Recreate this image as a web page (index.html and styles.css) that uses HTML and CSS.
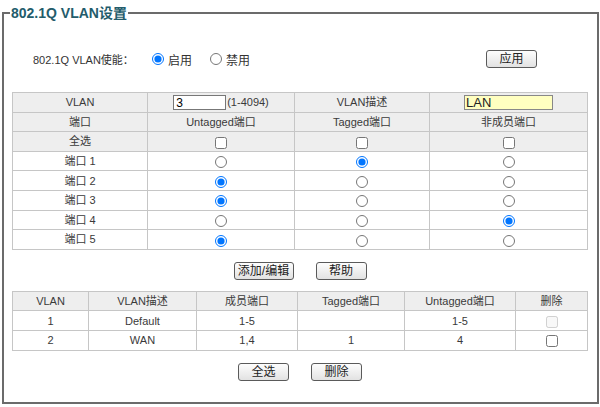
FILE: index.html
```html
<!DOCTYPE html>
<html>
<head>
<meta charset="utf-8">
<link rel="stylesheet" href="styles.css">
</head>
<body>
<fieldset class="panel">
  <legend class="panel-title">802.1Q VLAN设置</legend>
  <div class="enable-row">
    <span class="enable-label">802.1Q VLAN使能：</span>
    <label class="opt"><input type="radio" name="en" checked>启用</label>
    <label class="opt"><input type="radio" name="en">禁用</label>
    <span class="spacer"></span>
    <button class="btn btn-apply">应用</button>
  </div>

  <table class="grid cfg">
    <colgroup><col class="c1"><col class="c2"><col class="c3"><col class="c4"></colgroup>
    <tr class="head">
      <td>VLAN</td>
      <td><input class="vid" type="text" value="3">(1-4094)</td>
      <td>VLAN描述</td>
      <td><input class="desc" type="text" value="LAN"></td>
    </tr>
    <tr class="head">
      <td>端口</td><td>Untagged端口</td><td>Tagged端口</td><td>非成员端口</td>
    </tr>
    <tr class="head">
      <td>全选</td><td><input type="checkbox"></td><td><input type="checkbox"></td><td><input type="checkbox"></td>
    </tr>
    <tr>
      <td>端口 1</td><td><input type="radio" name="p1"></td><td><input type="radio" name="p1" checked></td><td><input type="radio" name="p1"></td>
    </tr>
    <tr>
      <td>端口 2</td><td><input type="radio" name="p2" checked></td><td><input type="radio" name="p2"></td><td><input type="radio" name="p2"></td>
    </tr>
    <tr>
      <td>端口 3</td><td><input type="radio" name="p3" checked></td><td><input type="radio" name="p3"></td><td><input type="radio" name="p3"></td>
    </tr>
    <tr>
      <td>端口 4</td><td><input type="radio" name="p4"></td><td><input type="radio" name="p4"></td><td><input type="radio" name="p4" checked></td>
    </tr>
    <tr>
      <td>端口 5</td><td><input type="radio" name="p5" checked></td><td><input type="radio" name="p5"></td><td><input type="radio" name="p5"></td>
    </tr>
  </table>

  <div class="btn-row mid">
    <button class="btn btn-edit">添加/编辑</button>
    <button class="btn">帮助</button>
  </div>

  <table class="grid list">
    <colgroup><col class="l1"><col class="l2"><col class="l3"><col class="l4"><col class="l5"><col class="l6"></colgroup>
    <tr class="head">
      <td>VLAN</td><td>VLAN描述</td><td>成员端口</td><td>Tagged端口</td><td>Untagged端口</td><td>删除</td>
    </tr>
    <tr>
      <td>1</td><td>Default</td><td>1-5</td><td></td><td>1-5</td><td><input type="checkbox" disabled></td>
    </tr>
    <tr>
      <td>2</td><td>WAN</td><td>1,4</td><td>1</td><td>4</td><td><input type="checkbox"></td>
    </tr>
  </table>

  <div class="btn-row bottom">
    <button class="btn">全选</button>
    <button class="btn">删除</button>
  </div>
</fieldset>
</body>
</html>
```
FILE: styles.css
```css
html, body {
  margin: 0;
  padding: 0;
  background: #ffffff;
}
body {
  font-family: "Liberation Sans", "Noto Sans CJK SC", sans-serif;
  font-size: 11px;
  color: #333333;
}
.panel {
  margin: 4px 2px 0 2px;
  padding: 0 9px 21px 8px;
  border: 2px solid #6b6b6b;
}
.panel-title {
  margin-left: -2px;
  padding: 0 1px;
  font-size: 14px;
  font-weight: bold;
  line-height: 18px;
  color: #235c6b;
}
.enable-row {
  display: flex;
  align-items: center;
  height: 20px;
  margin-top: 27px;
  padding: 0 51px 0 21px;
}
.enable-label {
  width: 116px;
  flex: none;
}
.opt {
  display: flex;
  align-items: center;
  margin-right: 15px;
  font-size: 12px;
}
.opt input {
  margin: 0 4px 0 3px;
  width: 12px;
  height: 12px;
}
.spacer { flex: 1; }
.btn {
  font-family: "Liberation Sans", "Noto Sans CJK SC", sans-serif;
  font-size: 12px;
  color: #222;
  height: 18px;
  width: 51px;
  padding: 0;
  border: 1px solid #5a5a5a;
  border-radius: 3px;
  background: linear-gradient(#fdfdfd, #e2e2e2);
  line-height: 16px;
}
.btn-edit { width: 60px; }
.grid {
  width: 100%;
  border-collapse: collapse;
  table-layout: fixed;
}
.grid td {
  border: 1px solid #c6c6c6;
  text-align: center;
  padding: 0;
  height: 18.6px;
  line-height: 14px;
  color: #3a3a3a;
}
.grid tr.head td {
  background: #eeeeee;
}
.cfg { margin-top: 23px; }
.cfg .c1 { width: 135px; }
.cfg .c2 { width: 147px; }
.cfg .c3 { width: 135px; }
.cfg .c4 { width: 158px; }
.grid input[type=radio],
.grid input[type=checkbox] {
  margin: 0;
  width: 12px;
  height: 12px;
  vertical-align: middle;
}
.vid {
  width: 53px;
  height: 15px;
  box-sizing: border-box;
  border: 1px solid #777;
  padding: 0 2px;
  margin: 0 1px 0 0;
  font-family: "Liberation Sans", sans-serif;
  font-size: 12px;
  vertical-align: middle;
}
.desc {
  width: 89px;
  height: 15px;
  box-sizing: border-box;
  border: 1px solid #888;
  background: #ffffc0;
  padding: 0 1px;
  margin: 0;
  font-family: "Liberation Sans", sans-serif;
  font-size: 13px;
  vertical-align: middle;
  color: #222;
}
.btn-row {
  display: flex;
  justify-content: center;
  gap: 22px;
}
.btn-row.mid { margin-top: 12px; }
.list { margin-top: 11px; }
.list .l1 { width: 76px; }
.list .l2 { width: 108px; }
.list .l3 { width: 101px; }
.list .l4 { width: 107px; }
.list .l5 { width: 111px; }
.list .l6 { width: 72px; }
.btn-row.bottom { margin-top: 12px; }
```
